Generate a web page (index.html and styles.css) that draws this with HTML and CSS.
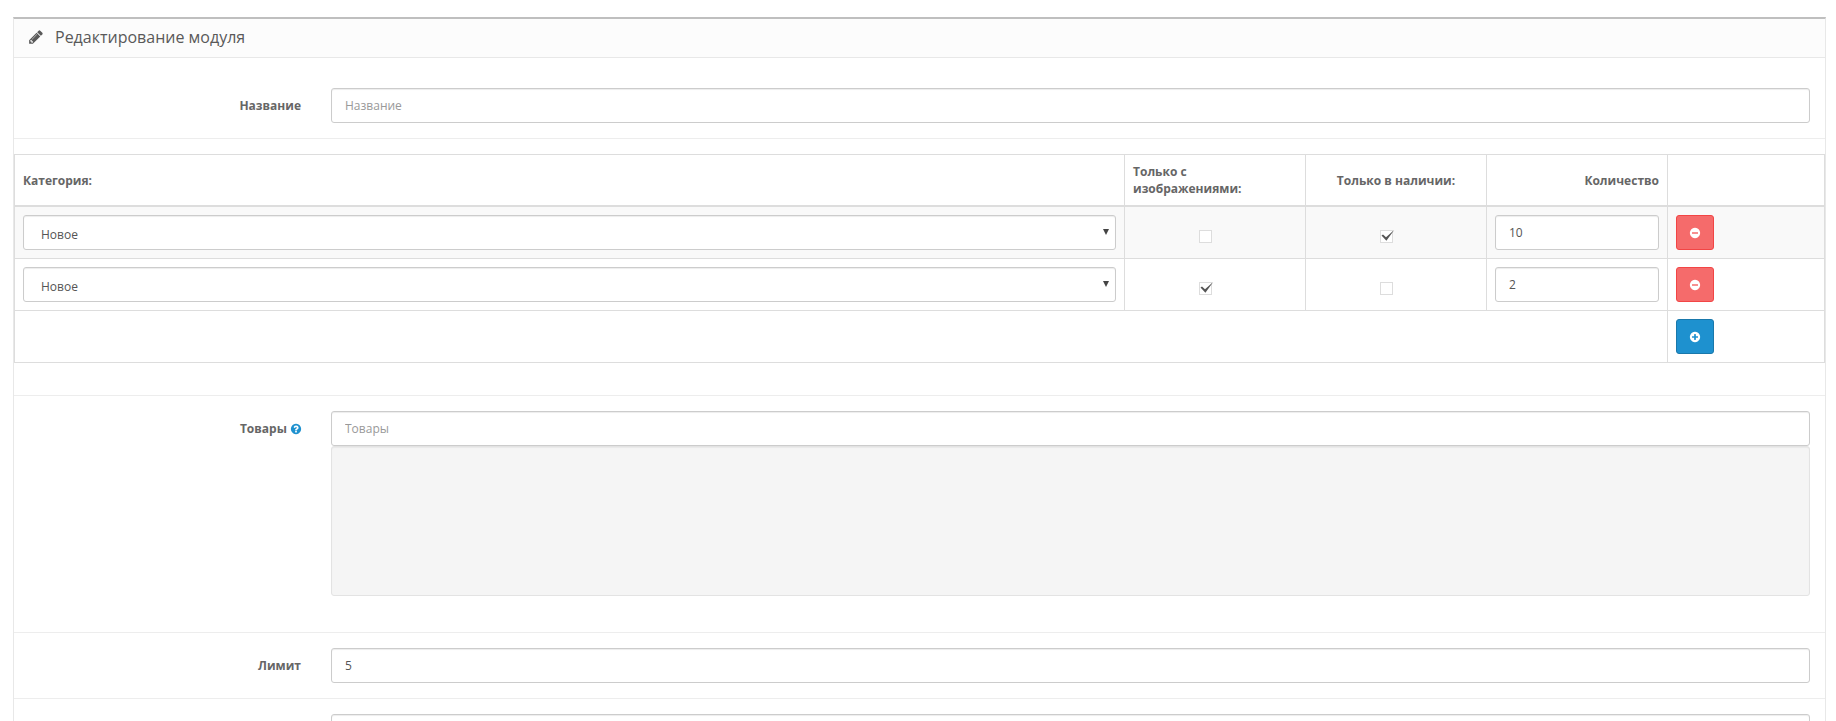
FILE: index.html
```html
<!DOCTYPE html>
<html lang="ru">
<head>
<meta charset="utf-8">
<title>Редактирование модуля</title>
<link rel="stylesheet" href="styles.css">
</head>
<body>
<svg class="defs" width="0" height="0" aria-hidden="true">
  <symbol id="i-minus" viewBox="0 0 1792 1792"><path d="M1344 960v-128q0-26-19-45t-45-19h-768q-26 0-45 19t-19 45v128q0 26 19 45t45 19h768q26 0 45-19t19-45zm320-64q0 209-103 385.5t-279.5 279.5-385.5 103-385.5-103-279.5-279.5-103-385.5 103-385.5 279.5-279.5 385.5-103 385.5 103 279.5 279.5 103 385.5z"/></symbol>
  <symbol id="i-plus" viewBox="0 0 1792 1792"><path d="M1344 960v-128q0-26-19-45t-45-19h-256v-256q0-26-19-45t-45-19h-128q-26 0-45 19t-19 45v256h-256q-26 0-45 19t-19 45v128q0 26 19 45t45 19h256v256q0 26 19 45t45 19h128q26 0 45-19t19-45v-256h256q26 0 45-19t19-45zm320-64q0 209-103 385.5t-279.5 279.5-385.5 103-385.5-103-279.5-279.5-103-385.5 103-385.5 279.5-279.5 385.5-103 385.5 103 279.5 279.5 103 385.5z"/></symbol>
  <symbol id="i-check" viewBox="0 0 15 12"><path d="M1.5 5.5L3 4.6L6 7.2L14.2 0L6.4 10.8Z"/></symbol>
</svg>
<div class="panel">
  <div class="panel-heading">
    <svg class="icon-pencil" viewBox="0 0 1792 1792"><path d="M491 1536l91-91-235-235-91 91v107h128v128h107zm523-928q0-22-22-22-10 0-17 7l-542 542q-7 7-7 17 0 22 22 22 10 0 17-7l542-542q7-7 7-17zm-54-192l416 416-832 832h-416v-416zm683 96q0 53-37 90l-166 166-416-416 166-165q36-38 90-38 53 0 91 38l235 234q37 39 37 91z"/></svg>
    <h3 class="panel-title">Редактирование модуля</h3>
  </div>
  <form class="panel-body">
    <div class="form-row form-row-first">
      <label class="form-label">Название</label>
      <div class="form-field"><input class="control" type="text" placeholder="Название"></div>
    </div>
    <div class="table-wrap">
      <table class="grid-table">
        <colgroup>
          <col class="col-cat"><col class="col-flag"><col class="col-flag"><col class="col-flag"><col>
        </colgroup>
        <thead>
          <tr>
            <th class="left">Категория:</th>
            <th class="left">Только с изображениями:</th>
            <th class="center">Только в наличии:</th>
            <th class="right">Количество</th>
            <th></th>
          </tr>
        </thead>
        <tbody>
          <tr class="striped">
            <td><div class="select-wrap"><select class="control select"><option>Новое</option></select></div></td>
            <td class="center"><span class="check"></span></td>
            <td class="center"><span class="check"><svg class="check-mark"><use href="#i-check"/></svg></span></td>
            <td><input class="control" type="text" value="10"></td>
            <td><button class="btn btn-danger" type="button"><svg class="btn-icon"><use href="#i-minus"/></svg></button></td>
          </tr>
          <tr>
            <td><div class="select-wrap"><select class="control select"><option>Новое</option></select></div></td>
            <td class="center"><span class="check"><svg class="check-mark"><use href="#i-check"/></svg></span></td>
            <td class="center"><span class="check"></span></td>
            <td><input class="control" type="text" value="2"></td>
            <td><button class="btn btn-danger" type="button"><svg class="btn-icon"><use href="#i-minus"/></svg></button></td>
          </tr>
          <tr>
            <td colspan="4"></td>
            <td><button class="btn btn-primary" type="button"><svg class="btn-icon"><use href="#i-plus"/></svg></button></td>
          </tr>
        </tbody>
      </table>
    </div>
    <div class="form-row">
      <label class="form-label">Товары <svg class="icon-help" viewBox="0 0 1792 1792"><path d="M1024 1376v-192q0-14-9-23t-23-9h-192q-14 0-23 9t-9 23v192q0 14 9 23t23 9h192q14 0 23-9t9-23zm256-672q0-88-55.5-163t-138.5-116-170-41q-243 0-371 213-15 24 8 42l132 100q7 6 19 6 16 0 25-12 53-68 86-92 34-24 86-24 48 0 85.5 26t37.5 59q0 38-20 61t-68 45q-63 28-115.5 86.5t-52.5 125.5v36q0 14 9 23t23 9h192q14 0 23-9t9-23q0-19 21.5-49.5t54.5-49.5q32-18 49-28.5t46-35 44.5-48 28-60.5 12.5-81zm384 192q0 209-103 385.5t-279.5 279.5-385.5 103-385.5-103-279.5-279.5-103-385.5 103-385.5 279.5-279.5 385.5-103 385.5 103 279.5 279.5 103 385.5z"/></svg></label>
      <div class="form-field">
        <input class="control" type="text" placeholder="Товары">
        <div class="well"></div>
      </div>
    </div>
    <div class="form-row">
      <label class="form-label">Лимит</label>
      <div class="form-field"><input class="control" type="text" value="5"></div>
    </div>
    <div class="form-row">
      <label class="form-label"></label>
      <div class="form-field"><input class="control" type="text"></div>
    </div>
  </form>
</div>
</body>
</html>
```
FILE: styles.css
```css
html { overflow: hidden; }
* { box-sizing: border-box; }
body {
  margin: 0;
  padding: 17px 10px 0 13px;
  background: #fff;
  font-family: "Open Sans", sans-serif;
  font-size: 12px;
  line-height: 17px;
  color: #666;
}
.defs { position: absolute; }
.panel {
  border: 1px solid #e8e8e8;
  border-top: 2px solid #bfbfbf;
  background: #fff;
}
.panel-heading {
  display: flex;
  align-items: center;
  height: 39px;
  padding-left: 14px;
  padding-bottom: 2px;
  background: #fcfcfc;
  border-bottom: 1px solid #e8e8e8;
}
.icon-pencil { width: 16px; height: 16px; fill: #595959; margin-right: 11px; }
.panel-title { margin: 0; font-size: 16px; font-weight: 400; color: #595959; }
.form-row {
  display: flex;
  gap: 30px;
  padding: 15px 15px 15px 0;
  border-top: 1px solid #ededed;
}
.form-row-first { border-top: 0; padding-top: 30px; }
.form-label {
  width: 287px;
  flex: none;
  text-align: right;
  font-weight: 700;
  line-height: 35px;
  color: #666;
}
.form-field { flex: 1; }
.control {
  display: block;
  width: 100%;
  height: 35px;
  padding: 8px 13px;
  border: 1px solid #ccc;
  border-radius: 3px;
  background: #fff;
  box-shadow: inset 0 1px 1px rgba(0, 0, 0, .075);
  font-family: inherit;
  font-size: 12px;
  color: #555;
}
.control::placeholder { color: #999; opacity: 1; }
.select {
  appearance: none;
  -webkit-appearance: none;
  padding: 10px 13px 8px 17px;
}
.select-wrap { position: relative; }
.select-wrap::after {
  content: "";
  position: absolute;
  right: 7px;
  top: 14px;
  border-left: 3px solid transparent;
  border-right: 3px solid transparent;
  border-top: 6px solid #444;
}
.well {
  height: 150px;
  background: #f5f5f5;
  border: 1px solid #e3e3e3;
  border-radius: 3px;
  box-shadow: inset 0 1px 1px rgba(0, 0, 0, .05);
  margin-bottom: 21px;
}
.table-wrap { border-top: 1px solid #ededed; padding-top: 15px; padding-bottom: 32px; }
.grid-table {
  width: 100%;
  table-layout: fixed;
  border-collapse: collapse;
  border-spacing: 0;
}
.col-cat { width: 1110px; }
.col-flag { width: 181px; }
.grid-table th, .grid-table td {
  border: 1px solid #ddd;
  padding: 8px;
  height: 52px;
}
.grid-table th { height: 51px; border-bottom-width: 2px; font-weight: 700; color: #666; vertical-align: middle; }
.grid-table td { vertical-align: top; }
.left { text-align: left; }
.center { text-align: center; }
.right { text-align: right; }
.grid-table td.center { vertical-align: middle; padding-top: 14px; padding-bottom: 8px; }
.striped td { background: #f9f9f9; }
.check {
  display: inline-block;
  position: relative;
  width: 13px;
  height: 13px;
  margin-right: 19px;
  background: #fff;
  border: 1px solid #ddd;
  vertical-align: middle;
}
.check-mark {
  position: absolute;
  left: -1px;
  top: -1px;
  width: 15px;
  height: 12px;
  fill: #555;
}
.btn {
  display: flex;
  align-items: center;
  justify-content: center;
  width: 38px;
  height: 35px;
  padding: 0;
  border: 1px solid;
  border-radius: 3px;
}
.btn-danger { background: #f56b6b; border-color: #f24545; }
.btn-primary { background: #1e91cf; border-color: #1978ab; }
.btn-icon { width: 12px; height: 12px; fill: #fff; }
.icon-help { width: 12px; height: 12px; fill: #1e91cf; vertical-align: -2px; margin-right: -1px; }
```
